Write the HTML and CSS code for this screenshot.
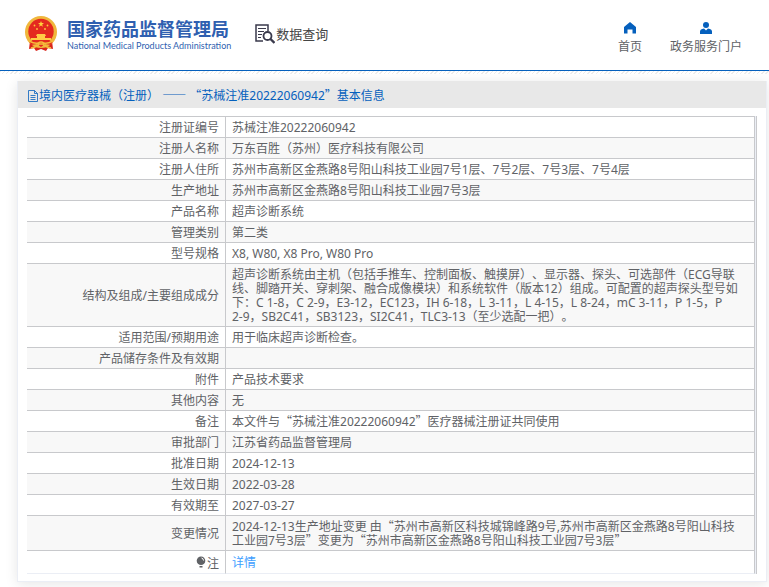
FILE: index.html
```html
<!DOCTYPE html>
<html lang="zh-CN">
<head>
<meta charset="utf-8">
<title>国家药品监督管理局 数据查询</title>
<link rel="stylesheet" href="styles.css">
</head>
<body>
<header class="site-header">
  <a class="brand" href="#">
    <svg class="emblem" viewBox="0 0 32 36" aria-hidden="true">
      <path d="M5 25 4 33l5-1 2 3 5-2 5 2 2-3 5 1-1-8z" fill="#d9251c"/>
      <circle cx="16" cy="16" r="16" fill="#f0b73c"/>
      <circle cx="16" cy="15.500" r="12.700" fill="#e4291f"/>
      <path d="m16 5 .8 2.100h2.200l-1.800 1.400.7 2.200-1.900-1.300-1.900 1.300.7-2.200L13 7.100h2.200z" fill="#ffd23c"/>
      <g fill="#ffc83c"><circle cx="9.500" cy="9.500" r=".9"/><circle cx="22.500" cy="9.500" r=".9"/><circle cx="12" cy="13" r=".9"/><circle cx="20" cy="13" r=".9"/></g>
      <path d="M12 18h8l1 2h-1v2h6v2H6v-2h6v-2h-1z" fill="#ffcb45"/>
      <path d="M4 25h24l-2 4-6-1-4 3-4-3-6 1z" fill="#e4291f"/>
      <path d="M4 25q6 3 9 2 3-2 6 0 3 1 9-2M6 32q6-1 8-4h4q2 3 8 4" fill="none" stroke="#f5bd3b" stroke-width="1.500"/>
    </svg>
    <span class="brand-text">
      <span class="brand-cn">国家药品监督管理局</span>
      <span class="brand-en">National Medical Products Administration</span>
    </span>
  </a>
  <a class="query" href="#">
    <svg class="query-icon" viewBox="0 0 20 20" fill="none" stroke="#3a3a4c" aria-hidden="true">
      <path d="M8 17H1V1h12v6" stroke-width="1.500"/>
      <path d="M3 4.500h8M3 7.500h6M3 10.500h4M3 13.500h3" stroke-width="1.200"/>
      <circle cx="12.500" cy="12" r="4" stroke-width="1.800"/>
      <path d="m15.500 15 4 4" stroke-width="2.400"/>
    </svg>
    <span>数据查询</span>
  </a>
  <nav class="nav">
    <a href="#">
      <svg viewBox="0 0 12 12" fill="#0560bd" aria-hidden="true"><path d="M6 0 0 5v6.500h3.500V7.500h5v4H12V5z"/></svg>
      <span>首页</span>
    </a>
    <a href="#">
      <svg viewBox="0 0 12 12" fill="#0560bd" aria-hidden="true"><circle cx="6" cy="3" r="3"/><path d="M0 12V9.500Q0 7 4 6.500l2 2 2-2q4 .5 4 3V12z"/></svg>
      <span>政务服务门户</span>
    </a>
  </nav>
</header>
<main class="card">
  <h1 class="card-title">
    <svg viewBox="0 0 10 12" fill="none" stroke="#0560bd" stroke-width=".8" aria-hidden="true"><path d="M.5 .5h6l3 3v8h-9zM6.500 .5v3h3M2.500 5.500h5M2.500 7.500h5M2.500 9.500h5"/></svg>
    <span>境内医疗器械（注册） <span class="wide">——</span> <span class="wide">“</span>苏械注准20222060942<span class="wide">”</span>基本信息</span>
  </h1>
  <div class="table-wrap">
    <table>
      <tbody>
        <tr><th scope="row">注册证编号</th><td>苏械注准20222060942</td></tr>
        <tr><th scope="row">注册人名称</th><td>万东百胜（苏州）医疗科技有限公司</td></tr>
        <tr><th scope="row">注册人住所</th><td>苏州市高新区金燕路8号阳山科技工业园7号1层、7号2层、7号3层、7号4层</td></tr>
        <tr><th scope="row">生产地址</th><td>苏州市高新区金燕路8号阳山科技工业园7号3层</td></tr>
        <tr><th scope="row">产品名称</th><td>超声诊断系统</td></tr>
        <tr><th scope="row">管理类别</th><td>第二类</td></tr>
        <tr><th scope="row">型号规格</th><td>X8, W80, X8 Pro, W80 Pro</td></tr>
        <tr><th scope="row">结构及组成/主要组成成分</th><td>超声诊断系统由主机（包括手推车、控制面板、触摸屏）、显示器、探头、可选部件（ECG导联线、脚踏开关、穿刺架、融合成像模块）和系统软件（版本12）组成。可配置的超声探头型号如下：C 1-8，C 2-9，E3-12，EC123，IH 6-18，L 3-11，L 4-15，L 8-24，mC 3-11，P 1-5，P <span class="model">2-9</span>，SB2C41，SB3123，SI2C41，TLC3-13（至少选配一把）。</td></tr>
        <tr><th scope="row">适用范围/预期用途</th><td>用于临床超声诊断检查。</td></tr>
        <tr><th scope="row">产品储存条件及有效期</th><td></td></tr>
        <tr><th scope="row">附件</th><td>产品技术要求</td></tr>
        <tr><th scope="row">其他内容</th><td>无</td></tr>
        <tr><th scope="row">备注</th><td>本文件与<span class="wide">“</span>苏械注准20222060942<span class="wide">”</span>医疗器械注册证共同使用</td></tr>
        <tr><th scope="row">审批部门</th><td>江苏省药品监督管理局</td></tr>
        <tr><th scope="row">批准日期</th><td>2024-12-13</td></tr>
        <tr><th scope="row">生效日期</th><td>2022-03-28</td></tr>
        <tr><th scope="row">有效期至</th><td>2027-03-27</td></tr>
        <tr><th scope="row">变更情况</th><td>2024-12-13生产地址变更 由<span class="wide">“</span>苏州市高新区科技城锦峰路9号,苏州市高新区金燕路8号阳山科技工业园7号3层<span class="wide">”</span>变更为<span class="wide">“</span>苏州市高新区金燕路8号阳山科技工业园7号3层<span class="wide">”</span></td></tr>
        <tr class="note"><th scope="row"><svg viewBox="0 0 10 12" aria-hidden="true"><circle cx="5" cy="4.800" r="4.300" fill="#606266"/><path d="M3.500 10h3v1.500h-3z" fill="#606266"/><path d="M5.500 2q2 .5 2 2.500" fill="none" stroke="#fff"/></svg>注</th><td><a href="#">详情</a></td></tr>
      </tbody>
    </table>
  </div>
</main>
</body>
</html>
```
FILE: styles.css
```css
* {
  box-sizing: border-box;
}

body {
  margin: 0;
  background: #fff;
  color: #606266;
  font: 12px/14px "Noto Sans", "Noto Sans CJK SC", sans-serif;
  text-spacing-trim: space-all;
}

a {
  color: inherit;
  text-decoration: none;
}

svg {
  display: block;
  flex: none;
}

.site-header {
  display: flex;
  align-items: center;
  height: 71px;
  padding: 0 27px 0 25px;
  border-bottom: 1px solid #0560bd;
}

.site-header::after {
  content: "";
  position: absolute;
  top: 71px;
  left: 0;
  right: 0;
  height: 3px;
  background: repeating-linear-gradient(135deg, #ececec 0 1px, #fff 1px 3px);
}

.brand {
  display: flex;
  align-items: center;
  gap: 10px;
  padding-bottom: 2px;
  color: #2f5fb0;
}

.emblem {
  width: 32px;
  height: 36px;
}

.brand-text {
  display: flex;
  flex-direction: column;
  padding-top: 2px;
  white-space: nowrap;
}

.brand-cn {
  font-size: 18px;
  line-height: 22px;
  font-weight: 700;
}

.brand-en {
  font: 400 9px/12px Lato, sans-serif;
}

.query {
  display: flex;
  align-items: center;
  gap: 1px;
  margin-left: 24px;
  padding-bottom: 2px;
  color: #444;
  font-size: 13px;
  line-height: 18px;
}

.query-icon {
  width: 20px;
  height: 20px;
}

.nav {
  display: flex;
  gap: 28px;
  margin-left: auto;
  padding-top: 6px;
}

.nav a {
  display: flex;
  flex-direction: column;
  align-items: center;
  gap: 6px;
}

.nav svg {
  width: 12px;
  height: 12px;
}

.card {
  margin: 10px 2px 5px 17px;
  border: 1px solid #ebeef5;
  border-top: 0;
  box-shadow: 0 2px 12px rgba(0, 0, 0, 0.1);
}

.card-title {
  display: flex;
  align-items: center;
  gap: 1px;
  margin: 0;
  padding: 8px 10px 5px;
  background: #e8e8e8;
  color: #0560bd;
  font-size: 12px;
  line-height: 14px;
  font-weight: 400;
}

.card-title svg {
  width: 10px;
  height: 12px;
}

.wide {
  font-family: "Noto Sans CJK SC", sans-serif;
  line-height: 1;
}

.model {
  white-space: nowrap;
}

.table-wrap {
  margin: 8px 9px 7px;
  border-right: 1px solid #c8c9cc;
  padding-right: 1px;
  background: #ebeef5;
}

table {
  width: 100%;
  border-spacing: 0;
  border-top: 1px solid #c8c9cc;
  background: #fff;
}

th,
td {
  padding: 4px 6px 2px;
  border-right: 1px solid #c8c9cc;
  border-bottom: 1px solid #c8c9cc;
  font-weight: 400;
}

th {
  width: 199px;
  text-align: right;
}

td {
  height: 21px;
  padding-right: 10px;
  text-align: left;
}

tr:nth-child(even) {
  background: #f8f8f8;
}

.note th,
.note td {
  height: 23px;
  padding-top: 4px;
  border-bottom-color: #ebeef5;
}

.note svg {
  display: inline-block;
  width: 10px;
  height: 12px;
  margin-right: 1px;
  vertical-align: baseline;
}

.note a {
  color: #409eff;
}
```
